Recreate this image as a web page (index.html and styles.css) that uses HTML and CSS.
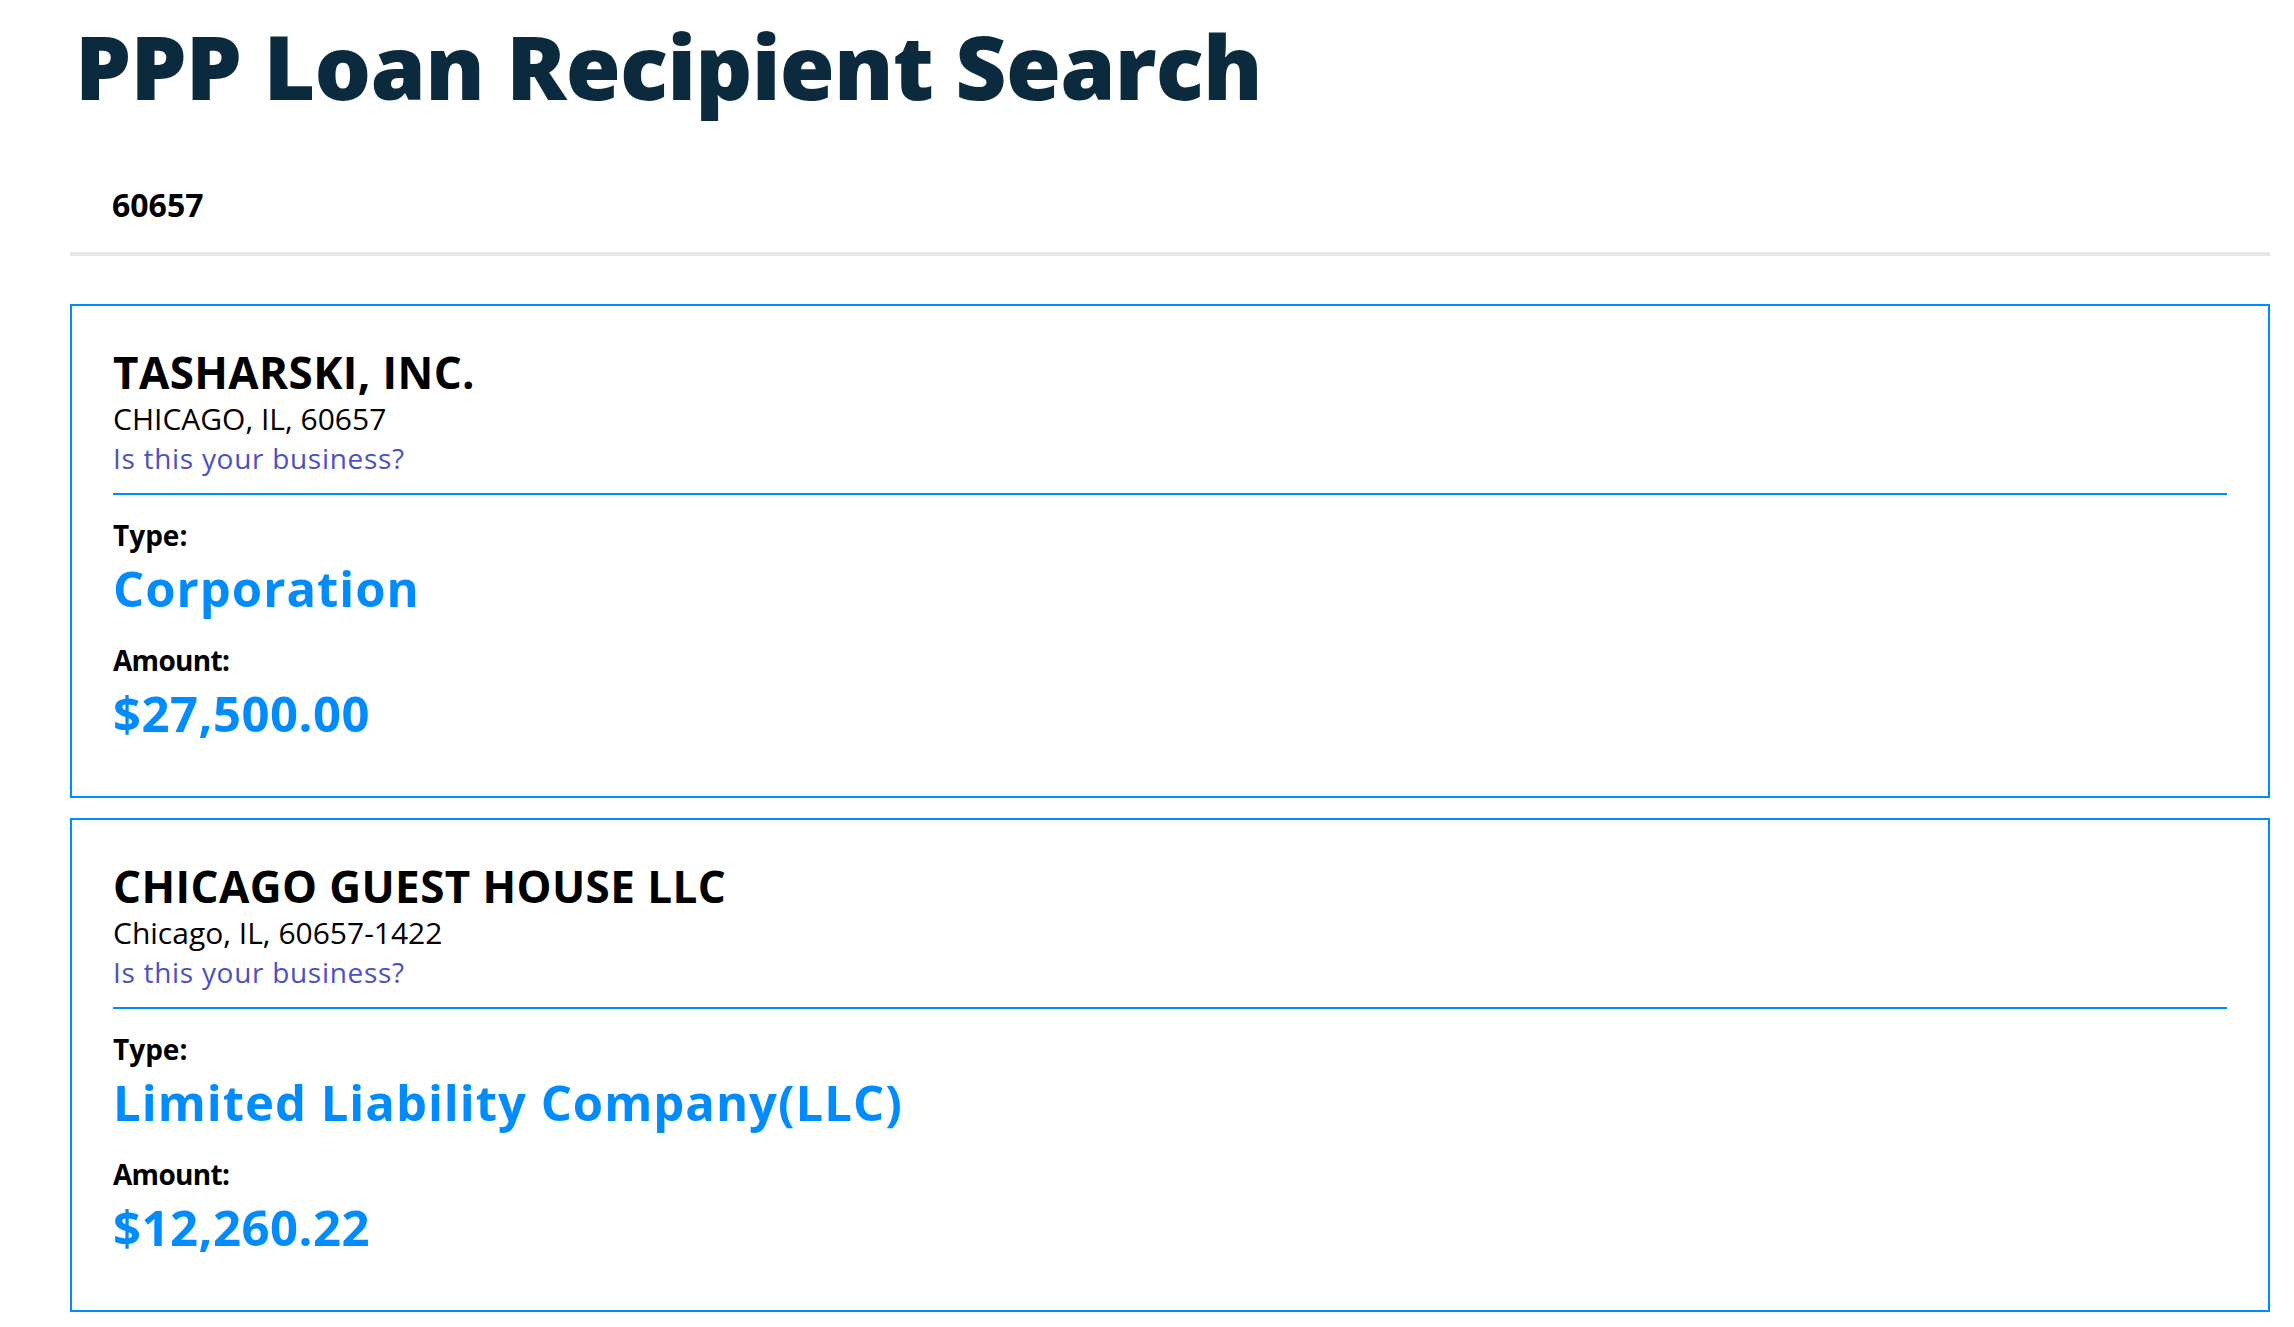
FILE: index.html
```html
<!DOCTYPE html>
<html lang="en">
<head>
<meta charset="utf-8">
<title>PPP Loan Recipient Search</title>
<link rel="stylesheet" href="styles.css">
</head>
<body>
<main class="page">
  <h1 class="title">PPP Loan Recipient Search</h1>
  <div class="search"><span class="query">60657</span></div>
  <section class="results">
    <article class="card">
      <header class="card-head">
        <h2 class="name">TASHARSKI, INC.</h2>
        <div class="addr">CHICAGO, IL, 60657</div>
        <a class="claim" href="#">Is this your business?</a>
      </header>
      <div class="label label-first">Type:</div>
      <div class="value value-text">Corporation</div>
      <div class="label label-amount">Amount:</div>
      <div class="value value-num">$27,500.00</div>
    </article>
    <article class="card">
      <header class="card-head">
        <h2 class="name">CHICAGO GUEST HOUSE LLC</h2>
        <div class="addr">Chicago, IL, 60657-1422</div>
        <a class="claim" href="#">Is this your business?</a>
      </header>
      <div class="label label-first">Type:</div>
      <div class="value value-text">Limited Liability Company(LLC)</div>
      <div class="label label-amount">Amount:</div>
      <div class="value value-num">$12,260.22</div>
    </article>
  </section>
</main>
</body>
</html>
```

FILE: styles.css
```css
* { box-sizing: border-box; }
html, body { margin: 0; padding: 0; background: #ffffff; }
body { font-family: "Open Sans", Lato, sans-serif; color: #000; }

.page {
  width: 2200px;
  margin-left: 70px;
}

.title {
  margin: 11px 0 0 5px;
  font-size: 89px;
  line-height: 110px;
  font-weight: 800;
  letter-spacing: -0.8px;
  color: #0b2a3d;
}

.search {
  margin-top: 64px;
  padding: 0 0 27px 42px;
  border-bottom: 4px solid #e5e7eb;
}
.query {
  display: block;
  font-size: 32px;
  line-height: 40px;
  font-weight: 700;
}

.results {
  display: flex;
  flex-direction: column;
  gap: 20px;
  margin-top: 48px;
}

.card {
  border: 2px solid #008cff;
  padding: 40px 41px 53px;
}

.card-head {
  display: flex;
  flex-direction: column;
  align-items: flex-start;
  padding-bottom: 17px;
  border-bottom: 2px solid #008cff;
}

.name {
  margin: 0 0 3px;
  font-size: 44px;
  line-height: 52px;
  font-weight: 700;
  letter-spacing: 0.4px;
}
.addr {
  font-size: 30px;
  line-height: 36px;
  font-weight: 400;
  margin-bottom: 3px;
}
.claim {
  font-size: 28px;
  line-height: 36px;
  letter-spacing: 0.7px;
  color: #4c51bf;
  text-decoration: none;
}

.label {
  margin-top: 24px;
  font-size: 28px;
  line-height: 36px;
  font-weight: 700;
}
.label-first { margin-top: 22px; }
.label-amount { letter-spacing: -0.7px; }

.value {
  margin-top: 5px;
  font-size: 49px;
  line-height: 60px;
  font-weight: 700;
  color: #008cff;
}
.value-text { letter-spacing: 1px; }
.value-num { letter-spacing: 0.5px; }
```
